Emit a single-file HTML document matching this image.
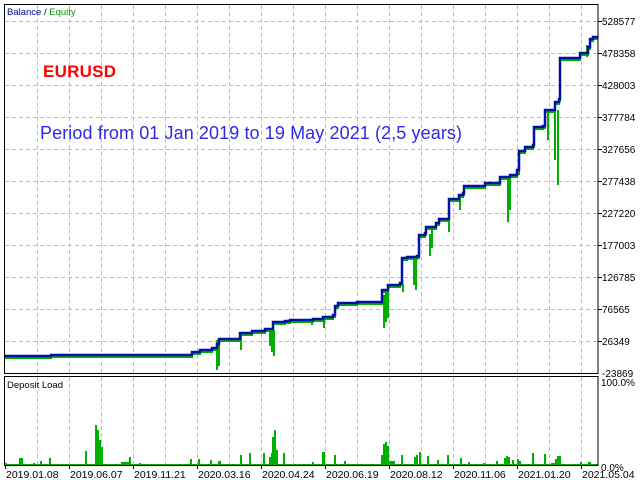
<!DOCTYPE html>
<html><head><meta charset="utf-8"><style>
html,body{margin:0;padding:0;background:#fff;width:640px;height:480px;overflow:hidden}
svg{display:block}
text{font-family:"Liberation Sans",sans-serif}
</style></head><body>
<svg width="640" height="480" viewBox="0 0 640 480">
<rect width="640" height="480" fill="#fff"/>
<g stroke="#bdbdbd" stroke-width="1" stroke-dasharray="4,3" fill="none">
<path d="M37.5 5V373M69.5 5V373M101.5 5V373M133.5 5V373M165.5 5V373M197.5 5V373M229.5 5V373M261.5 5V373M293.5 5V373M325.5 5V373M357.5 5V373M389.5 5V373M421.5 5V373M453.5 5V373M485.5 5V373M517.5 5V373M549.5 5V373M581.5 5V373"/>
<path d="M5 21.5H598M5 53.5H598M5 85.5H598M5 117.5H598M5 149.5H598M5 181.5H598M5 213.5H598M5 245.5H598M5 277.5H598M5 309.5H598M5 341.5H598"/>
<path d="M37.5 377V465M69.5 377V465M101.5 377V465M133.5 377V465M165.5 377V465M197.5 377V465M229.5 377V465M261.5 377V465M293.5 377V465M325.5 377V465M357.5 377V465M389.5 377V465M421.5 377V465M453.5 377V465M485.5 377V465M517.5 377V465M549.5 377V465M581.5 377V465"/>
</g>
<g stroke="#00b000" stroke-width="2" fill="none">
<path transform="translate(0,2)" d="M5 356 H51 V355 H192 V352 H200 V350 H212 V348 H217 V344 H219 V339 H240 V333 H252 V331 H265 V329 H273 V322 H285 V321 H290 V320 H313 V319 H323 V317 H333 V315 H335 V306 H338 V303 H357 V302 H382 V290 H388 V285 H400 V283 H402 V258 H407 V257 H417 V256 H419 V235 H425 V233 H426 V227 H436 V223 H439 V219 H449 V199 H459 V195 H463 V193 H464 V186 H485 V183 H500 V177 H510 V175 H517 V170 H519 V151 H525 V147 H533 V145 H534 V127 H543 V126 H545 V110 H555 V102 H559 V99 H560 V58 H580 V53 H588 V47 H590 V39 H593 V37 H598"/>
<path d="M217 340V370M219 340V366M241 336V350M270 332V346M272 330V352M274 330V356M312 320V325M324 318V328M384 295V328M386 290V322M388 290V318M403 284V292M414 258V285M416 258V290M430 234V256M432 230V248M449 220V232M460 195V210M508 178V222M510 178V210M519 150V175M548 110V140M555 105V160M558 110V185M587 45V57"/>
</g>
<path fill="none" stroke="#0010a8" stroke-width="2.5" d="M5 356 H51 V355 H192 V352 H200 V350 H212 V348 H217 V344 H219 V339 H240 V333 H252 V331 H265 V329 H273 V322 H285 V321 H290 V320 H313 V319 H323 V317 H333 V315 H335 V306 H338 V303 H357 V302 H382 V290 H388 V285 H400 V283 H402 V258 H407 V257 H417 V256 H419 V235 H425 V233 H426 V227 H436 V223 H439 V219 H449 V199 H459 V195 H463 V193 H464 V186 H485 V183 H500 V177 H510 V175 H517 V170 H519 V151 H525 V147 H533 V145 H534 V127 H543 V126 H545 V110 H555 V102 H559 V99 H560 V58 H580 V53 H588 V47 H590 V39 H593 V37 H598"/>
<g fill="#00b000">
<rect x="4" y="463" width="3" height="2"/><rect x="19" y="458" width="4" height="7"/><rect x="33" y="463" width="2" height="2"/><rect x="40" y="461" width="2" height="4"/><rect x="49" y="458" width="2" height="7"/><rect x="85" y="451" width="2" height="14"/><rect x="95" y="425" width="2" height="40"/><rect x="97" y="430" width="2" height="35"/><rect x="99" y="440" width="2" height="25"/><rect x="101" y="447" width="2" height="18"/><rect x="121" y="462" width="10" height="3"/><rect x="129" y="457" width="2" height="8"/><rect x="139" y="463" width="2" height="2"/>
<rect x="190" y="459" width="2" height="6"/><rect x="198" y="459" width="2" height="6"/><rect x="210" y="460" width="2" height="5"/><rect x="218" y="461" width="3" height="4"/><rect x="240" y="455" width="2" height="10"/><rect x="249" y="453" width="2" height="12"/><rect x="263" y="453" width="2" height="12"/><rect x="269" y="457" width="2" height="8"/><rect x="271" y="453" width="2" height="12"/><rect x="272" y="437" width="2" height="28"/><rect x="274" y="430" width="2" height="35"/><rect x="276" y="450" width="2" height="15"/><rect x="283" y="453" width="2" height="12"/><rect x="312" y="462" width="2" height="3"/><rect x="322" y="452" width="3" height="13"/><rect x="334" y="455" width="2" height="10"/><rect x="344" y="461" width="2" height="4"/>
<rect x="381" y="455" width="2" height="10"/><rect x="383" y="444" width="2" height="21"/><rect x="385" y="442" width="2" height="23"/><rect x="387" y="446" width="2" height="19"/><rect x="389" y="461" width="6" height="4"/><rect x="401" y="455" width="2" height="10"/><rect x="414" y="457" width="2" height="8"/><rect x="416" y="455" width="2" height="10"/><rect x="419" y="452" width="2" height="13"/><rect x="427" y="456" width="2" height="9"/><rect x="437" y="460" width="2" height="5"/><rect x="447" y="455" width="2" height="10"/><rect x="460" y="458" width="2" height="7"/><rect x="468" y="462" width="2" height="3"/>
<rect x="483" y="463" width="2" height="2"/><rect x="496" y="461" width="2" height="4"/><rect x="504" y="458" width="2" height="7"/><rect x="506" y="456" width="2" height="9"/><rect x="508" y="457" width="2" height="8"/><rect x="512" y="460" width="2" height="5"/><rect x="517" y="459" width="2" height="6"/><rect x="519" y="461" width="2" height="4"/><rect x="532" y="453" width="2" height="12"/><rect x="544" y="454" width="2" height="11"/><rect x="551" y="463" width="6" height="2"/><rect x="555" y="459" width="2" height="6"/><rect x="557" y="456" width="2" height="9"/><rect x="559" y="456" width="2" height="9"/><rect x="580" y="462" width="2" height="3"/><rect x="588" y="462" width="3" height="3"/>
<rect x="5" y="464" width="593" height="2"/>
</g>
<g stroke="#000" stroke-width="1" fill="none">
<rect x="4.5" y="4.5" width="593.5" height="369"/>
<rect x="4.5" y="376.5" width="593.5" height="89"/>
</g>
<g stroke="#000" stroke-width="1">
<path d="M598 21.5h4M598 53.5h4M598 85.5h4M598 117.5h4M598 149.5h4M598 181.5h4M598 213.5h4M598 245.5h4M598 277.5h4M598 309.5h4M598 341.5h4"/>
<path d="M5.5 466v3M69.5 466v3M133.5 466v3M197.5 466v3M261.5 466v3M325.5 466v3M389.5 466v3M453.5 466v3M517.5 466v3M581.5 466v3"/>
</g>
<text x="7" y="15" font-size="9.5"><tspan fill="#0000a0">Balance</tspan><tspan fill="#000"> / </tspan><tspan fill="#00a000">Equity</tspan></text>
<text x="7" y="388" font-size="9.5" fill="#000">Deposit Load</text>
<text x="43" y="77" font-size="17" font-weight="bold" fill="#ff0000" textLength="73">EURUSD</text>
<text x="40" y="139" font-size="18" fill="#2a2ae8" textLength="422">Period from 01 Jan 2019 to 19 May 2021 (2,5 years)</text>
<g font-size="10" fill="#000">
<text x="602" y="25">528577</text><text x="602" y="57">478358</text><text x="602" y="89">428003</text><text x="602" y="121">377784</text><text x="602" y="153">327656</text><text x="602" y="185">277438</text><text x="602" y="217">227220</text><text x="602" y="249">177003</text><text x="602" y="281">126785</text><text x="602" y="313">76565</text><text x="602" y="345">26349</text><text x="602" y="377">-23869</text>
<text x="601" y="386">100.0%</text><text x="601" y="471">0.0%</text>
</g>
<g font-size="10.5" fill="#000">
<text x="6" y="478">2019.01.08</text><text x="70" y="478">2019.06.07</text><text x="134" y="478">2019.11.21</text><text x="198" y="478">2020.03.16</text><text x="262" y="478">2020.04.24</text><text x="326" y="478">2020.06.19</text><text x="390" y="478">2020.08.12</text><text x="454" y="478">2020.11.06</text><text x="518" y="478">2021.01.20</text><text x="582" y="478">2021.05.04</text>
</g>
</svg>
</body></html>
